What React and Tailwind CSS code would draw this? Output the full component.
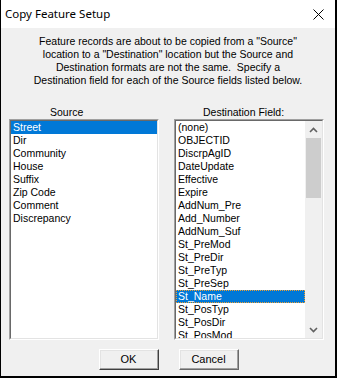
import { useState } from 'react'

const SOURCE_FIELDS = ['Street', 'Dir', 'Community', 'House', 'Suffix', 'Zip Code', 'Comment', 'Discrepancy']

const DEST_FIELDS = [
  '(none)',
  'OBJECTID',
  'DiscrpAgID',
  'DateUpdate',
  'Effective',
  'Expire',
  'AddNum_Pre',
  'Add_Number',
  'AddNum_Suf',
  'St_PreMod',
  'St_PreDir',
  'St_PreTyp',
  'St_PreSep',
  'St_Name',
  'St_PosTyp',
  'St_PosDir',
  'St_PosMod',
]

const font = { fontFamily: '"Liberation Sans", Arial, sans-serif' }

function Chevron({ down }) {
  return (
    <svg width="9" height="6" viewBox="0 0 9 6" className="block">
      <path
        d={down ? 'M1 1l3.5 3.5L8 1' : 'M1 5l3.5-3.5L8 5'}
        fill="none"
        stroke="#606060"
        strokeWidth="1.6"
      />
    </svg>
  )
}

// sunken 3D frame, classic win32 listbox
function Sunken({ children, className = '' }) {
  return (
    <div className={`border border-t-[#a0a0a0] border-l-[#a0a0a0] border-b-white border-r-white ${className}`}>
      <div className="h-full border border-t-[#696969] border-l-[#696969] border-b-[#e3e3e3] border-r-[#e3e3e3] bg-white overflow-hidden">
        {children}
      </div>
    </div>
  )
}

function Button({ children, isDefault }) {
  return (
    <button
      type="button"
      className={`w-[60px] h-[21px] text-[11px] text-black bg-[#f0f0f0] border border-t-white border-l-white ${
        isDefault ? 'border-b-[#404040] border-r-[#404040]' : 'border-b-[#696969] border-r-[#696969]'
      } shadow-[inset_-1px_-1px_0_#a0a0a0,inset_1px_1px_0_#e3e3e3]`}
    >
      {children}
    </button>
  )
}

export default function App() {
  const [src, setSrc] = useState(0)
  const [dst, setDst] = useState(13)

  return (
    <div className="w-[337px] h-[378px] bg-black pl-[1px] pr-[2px] pb-[2px] flex flex-col" style={font}>
      {/* Title bar */}
      <div className="h-[28px] shrink-0 bg-white flex items-center justify-between pl-[4px] pr-[11px]">
        <span className="text-[11.5px] text-black" style={{ fontFamily: '"Noto Sans", "Liberation Sans", sans-serif' }}>
          Copy Feature Setup
        </span>
        <svg width="11" height="11" viewBox="0 0 11 11">
          <path d="M0.5 0.5l10 10M10.5 0.5l-10 10" stroke="#000" strokeWidth="1" />
        </svg>
      </div>

      {/* Body */}
      <div className="flex-1 bg-[#f0f0f0] flex flex-col pt-[7px]">
        <p className="text-[10.5px] leading-[13px] text-black text-center px-[8px]">
          Feature records are about to be copied from a "Source"
          <br />
          location to a "Destination" location but the Source and
          <br />
          Destination formats are not the same.&nbsp; Specify a
          <br />
          Destination field for each of the Source fields listed below.
        </p>

        <div className="flex gap-[15px] pl-[8px] mt-[19px]">
          {/* Source */}
          <div className="w-[150px] flex flex-col">
            <div className="text-[10.5px] leading-[13px] h-[13px] pl-[41px] text-black">Source</div>
            <Sunken className="h-[221px]">
              <ul className="text-[10.5px] leading-[13px] text-black">
                {SOURCE_FIELDS.map((f, i) => (
                  <li
                    key={f}
                    onClick={() => setSrc(i)}
                    className={`h-[13px] pl-[2px] whitespace-nowrap ${i === src ? 'bg-[#0078d7] text-white' : ''}`}
                  >
                    {f}
                  </li>
                ))}
              </ul>
            </Sunken>
          </div>

          {/* Destination */}
          <div className="w-[150px] flex flex-col">
            <div className="text-[10.5px] leading-[13px] h-[13px] pl-[29px] text-black">Destination Field:</div>
            <Sunken className="h-[221px]">
              <div className="flex h-full">
                <ul className="flex-1 text-[10.5px] leading-[13px] text-black overflow-hidden">
                  {DEST_FIELDS.map((f, i) => (
                    <li
                      key={f}
                      onClick={() => setDst(i)}
                      className={`h-[13px] pl-[2px] whitespace-nowrap ${
                        i === dst ? 'bg-[#0078d7] text-white outline outline-1 -outline-offset-1 outline-dotted outline-[#f0a030]' : ''
                      }`}
                    >
                      {f}
                    </li>
                  ))}
                </ul>
                {/* Scrollbar */}
                <div className="w-[17px] bg-[#f0f0f0] flex flex-col">
                  <div className="h-[17px] flex items-center justify-center">
                    <Chevron />
                  </div>
                  <div className="flex-1 px-[1px]">
                    <div className="h-[60px] bg-[#cdcdcd]" />
                  </div>
                  <div className="h-[17px] flex items-center justify-center">
                    <Chevron down />
                  </div>
                </div>
              </div>
            </Sunken>
          </div>
        </div>

        <div className="flex justify-center gap-[20px] mt-[9px] pl-[1px]">
          <Button isDefault>OK</Button>
          <Button>Cancel</Button>
        </div>
      </div>
    </div>
  )
}
